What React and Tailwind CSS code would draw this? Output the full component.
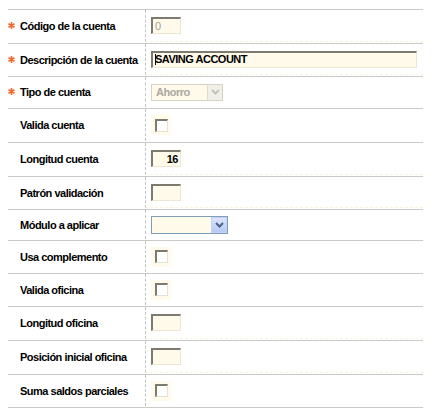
import React from 'react';

// filas del formulario: alto de cada fila (px) y tipo de control
const rows = [
  { label: 'Código de la cuenta', req: true, h: 34, type: 'text', value: '0', disabled: true, w: 30, line: true },
  { label: 'Descripción de la cuenta', req: true, h: 33, type: 'text', value: 'SAVING ACCOUNT', w: 266, caret: true, line: true },
  { label: 'Tipo de cuenta', req: true, h: 32, type: 'selectDisabled', value: 'Ahorro' },
  { label: 'Valida cuenta', h: 34, type: 'check' },
  { label: 'Longitud cuenta', h: 34, type: 'text', value: '16', w: 30, right: true, line: true },
  { label: 'Patrón validación', h: 33, type: 'text', value: '', w: 30, line: true },
  { label: 'Módulo a aplicar', h: 31, type: 'select' },
  { label: 'Usa complemento', h: 33, type: 'check' },
  { label: 'Valida oficina', h: 33, type: 'check' },
  { label: 'Longitud oficina', h: 34, type: 'text', value: '', w: 30, line: true },
  { label: 'Posición inicial oficina', h: 34, type: 'text', value: '', w: 30, line: true },
  { label: 'Suma saldos parciales', h: 33, type: 'check' },
];

const Chevron = ({ color }) => (
  <svg width="9" height="6" viewBox="0 0 9 6">
    <path d="M1 1 L4.5 4.5 L8 1" fill="none" stroke={color} strokeWidth="2" />
  </svg>
);

const Star = () => (
  <svg width="7" height="7" viewBox="0 0 7 7">
    <path d="M3.5 0 V7 M0.5 1.8 L6.5 5.2 M0.5 5.2 L6.5 1.8" stroke="#f5642c" strokeWidth="1.6" />
  </svg>
);

const TextBox = ({ row }) => (
  <div
    className="h-[17px] flex items-center bg-[#fffae9] border-t-2 border-l-2 border-t-[#7d7b70] border-l-[#7d7b70] border-b border-r border-b-[#ece6d2] border-r-[#ece6d2]"
    style={{ width: row.w }}
  >
    <span
      className={
        'w-full px-[2px] text-[11px] tracking-[-0.5px] leading-none ' +
        (row.disabled ? 'text-[#a09f98] font-normal' : 'text-black font-bold') +
        (row.right ? ' text-right pr-[2px]' : '')
      }
    >
      {row.caret && <span className="inline-block w-px h-[11px] bg-black align-middle mr-[-1px] -mt-[2px]" />}
      {row.value}
    </span>
  </div>
);

const CheckBox = () => (
  <div className="w-[20px] h-[20px] bg-[#fffae9] flex items-center justify-center">
    <div className="w-[13px] h-[13px] bg-white border-t-2 border-l-2 border-t-[#7d7b70] border-l-[#7d7b70] border-b border-r border-b-[#e4e1d6] border-r-[#e4e1d6]" />
  </div>
);

const SelectDisabled = ({ value }) => (
  <div className="w-[72px] h-[17px] flex bg-[#fffae9] border border-[#d6d3c4]">
    <span className="flex-1 pl-[4px] text-[11px] tracking-[-0.5px] font-bold text-[#aaa8a0] leading-[15px]">{value}</span>
    <div className="w-[15px] h-full bg-[#f0efe8] border-l border-[#dedcd0] flex items-center justify-center">
      <Chevron color="#c4c3bc" />
    </div>
  </div>
);

const SelectBlue = () => (
  <div className="w-[77px] h-[18px] flex bg-[#fffae9] border border-[#7f9db9]">
    <span className="flex-1" />
    <div className="w-[16px] h-full bg-gradient-to-b from-[#dbe5fd] to-[#b6c9f4] border border-[#c3d3f8] flex items-center justify-center">
      <Chevron color="#4d6185" />
    </div>
  </div>
);

const Control = ({ row }) => {
  if (row.type === 'text') return <TextBox row={row} />;
  if (row.type === 'check') return <CheckBox />;
  if (row.type === 'selectDisabled') return <SelectDisabled value={row.value} />;
  return <SelectBlue />;
};

export default function App() {
  return (
    <div
      className="w-[433px] h-[416px] bg-white pt-[9px] pl-[8px]"
      style={{ fontFamily: '"Liberation Sans", Arial, sans-serif' }}
    >
      <div className="w-[415px] border-t border-[#c9c9c9]">
        {rows.map((row, i) => (
          <div
            key={i}
            className="flex border-b border-[#c9c9c9] box-border"
            style={{ height: row.h }}
          >
            <div className="w-[137px] flex items-center">
              <span className="w-[12px] flex items-center -mt-[2px]">
                {row.req ? <Star /> : null}
              </span>
              <span className="text-[11px] tracking-[-0.5px] font-bold text-black whitespace-nowrap">{row.label}</span>
            </div>
            <div
              className={
                'flex-1 flex items-center pl-[5px] border-l border-dashed border-l-[#c4c4c4] mb-px ' +
                (row.line ? 'border-b border-b-[#fbf3dc]' : '')
              }
            >
              <Control row={row} />
            </div>
          </div>
        ))}
      </div>
    </div>
  );
}
